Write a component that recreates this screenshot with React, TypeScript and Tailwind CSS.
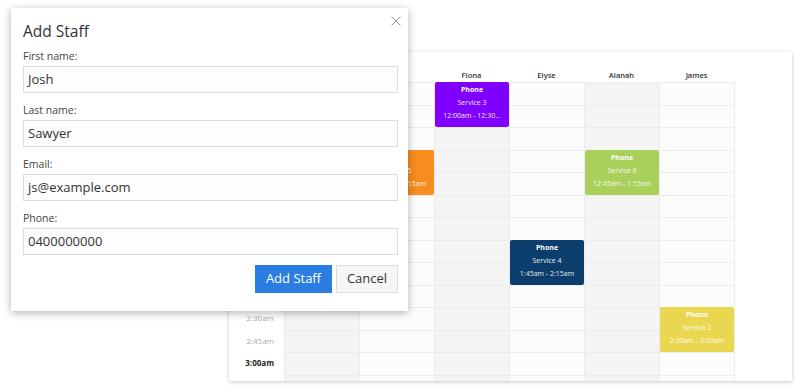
const staff = ['Sarah', 'Mike', 'Fiona', 'Elyse', 'Alanah', 'James']

// last row is only partly visible, so it gets no label
const times = [
    '12:00am', '12:15am', '12:30am', '12:45am',
    '1:00am', '1:15am', '1:30am', '1:45am',
    '2:00am', '2:15am', '2:30am', '2:45am',
    '3:00am', '',
]

type Booking = { col: number; row: number; color: string; service: string; time: string }

const bookings: Booking[] = [
    { col: 2, row: 0, color: 'bg-[#7f00ff]', service: 'Service 3', time: '12:00am - 12:30...' },
    { col: 1, row: 3, color: 'bg-[#f78c1f]', service: 'Service 5', time: '12:45am - 1:15am' },
    { col: 4, row: 3, color: 'bg-[#a9d05b]', service: 'Service 6', time: '12:45am - 1:15am' },
    { col: 3, row: 7, color: 'bg-[#0b3e6c]', service: 'Service 4', time: '1:45am - 2:15am' },
    { col: 5, row: 10, color: 'bg-[#e9d84f]', service: 'Service 2', time: '2:30am - 3:00am' },
]

const ROW = 22.5

function Scheduler() {
    return (
        <div className="h-[329px] w-[563px] overflow-hidden bg-white shadow-[0_1px_4px_rgba(0,0,0,0.22)]">
            <div className="flex h-[30px]">
                <div className="w-[55px]" />
                {staff.map((name) => (
                    <div key={name} className="w-[75px] pt-[17px] text-center text-[7.5px] leading-[12px] font-semibold text-[#333]">
                        {name}
                    </div>
                ))}
            </div>
            <div className="flex">
                <div className="w-[55px]">
                    {times.map((t, i) => (
                        <div
                            key={i}
                            className={`flex h-[22.5px] items-center justify-end pr-[10px] text-[8px] ${t.endsWith(':00am') ? 'font-bold text-[#222]' : 'text-[#aaa]'}`}
                        >
                            {t}
                        </div>
                    ))}
                </div>
                <div className="flex border-t border-l border-[#ececec]">
                    {staff.map((name, c) => (
                        <div key={name} className={`relative w-[75px] border-r border-[#ececec] ${c % 2 === 0 ? 'bg-[#f4f4f4]' : 'bg-[#fcfcfc]'}`}>
                            {times.map((_, i) => (
                                <div key={i} className="h-[22.5px] border-b border-[#ececec]" />
                            ))}
                            {bookings
                                .filter((b) => b.col === c)
                                .map((b) => (
                                    <div
                                        key={b.service}
                                        className={`absolute inset-x-0 h-[45px] rounded-[2px] pt-[1px] text-center text-[7px] leading-[13px] text-white ${b.color}`}
                                        style={{ top: b.row * ROW - 1 }}
                                    >
                                        <div className="font-bold">Phone</div>
                                        <div className="opacity-90">{b.service}</div>
                                        <div className="opacity-90">{b.time}</div>
                                    </div>
                                ))}
                        </div>
                    ))}
                </div>
            </div>
        </div>
    )
}

function Field({ label, value, last }: { label: string; value: string; last?: boolean }) {
    return (
        <div className={last ? '' : 'mb-[7px]'}>
            <div className="text-[10.5px] leading-[20px] text-[#444]">{label}</div>
            <div className="flex h-[27px] items-center border border-[#dcdcdc] bg-[#fdfdfd] pl-[4px] text-[13px] text-[#333]">
                {value}
            </div>
        </div>
    )
}

function AddStaffModal() {
    return (
        <div className="absolute left-[11px] top-[8px] h-[303px] w-[397px] bg-white pl-[12px] pr-[10px] shadow-[0_2px_8px_rgba(0,0,0,0.3)]">
            <button className="absolute right-[7px] top-[8px] h-[10px] w-[10px]">
                <svg viewBox="0 0 10 10" className="h-[10px] w-[10px]" stroke="#9a9a9a" strokeWidth="1">
                    <path d="M0.5 0.5 L9.5 9.5 M9.5 0.5 L0.5 9.5" />
                </svg>
            </button>
            <h2 className="h-[38px] pt-[13px] text-[15.5px] leading-[20px] text-[#333]">Add Staff</h2>
            <Field label="First name:" value="Josh" />
            <Field label="Last name:" value="Sawyer" />
            <Field label="Email:" value="js@example.com" />
            <Field label="Phone:" value="0400000000" last />
            <div className="mt-[10px] flex justify-end gap-[4px]">
                <button className="h-[28px] w-[77px] bg-[#2a7de1] text-[13px] text-white">Add Staff</button>
                <button className="h-[28px] w-[62px] border border-[#dddddd] bg-[#f6f6f6] text-[13px] text-[#333]">Cancel</button>
            </div>
        </div>
    )
}

export default function App() {
    return (
        <div className="relative h-[389px] w-[800px] overflow-hidden bg-white font-['Open_Sans',sans-serif]">
            <div className="pl-[229px] pt-[52px]">
                <Scheduler />
            </div>
            <AddStaffModal />
        </div>
    )
}
